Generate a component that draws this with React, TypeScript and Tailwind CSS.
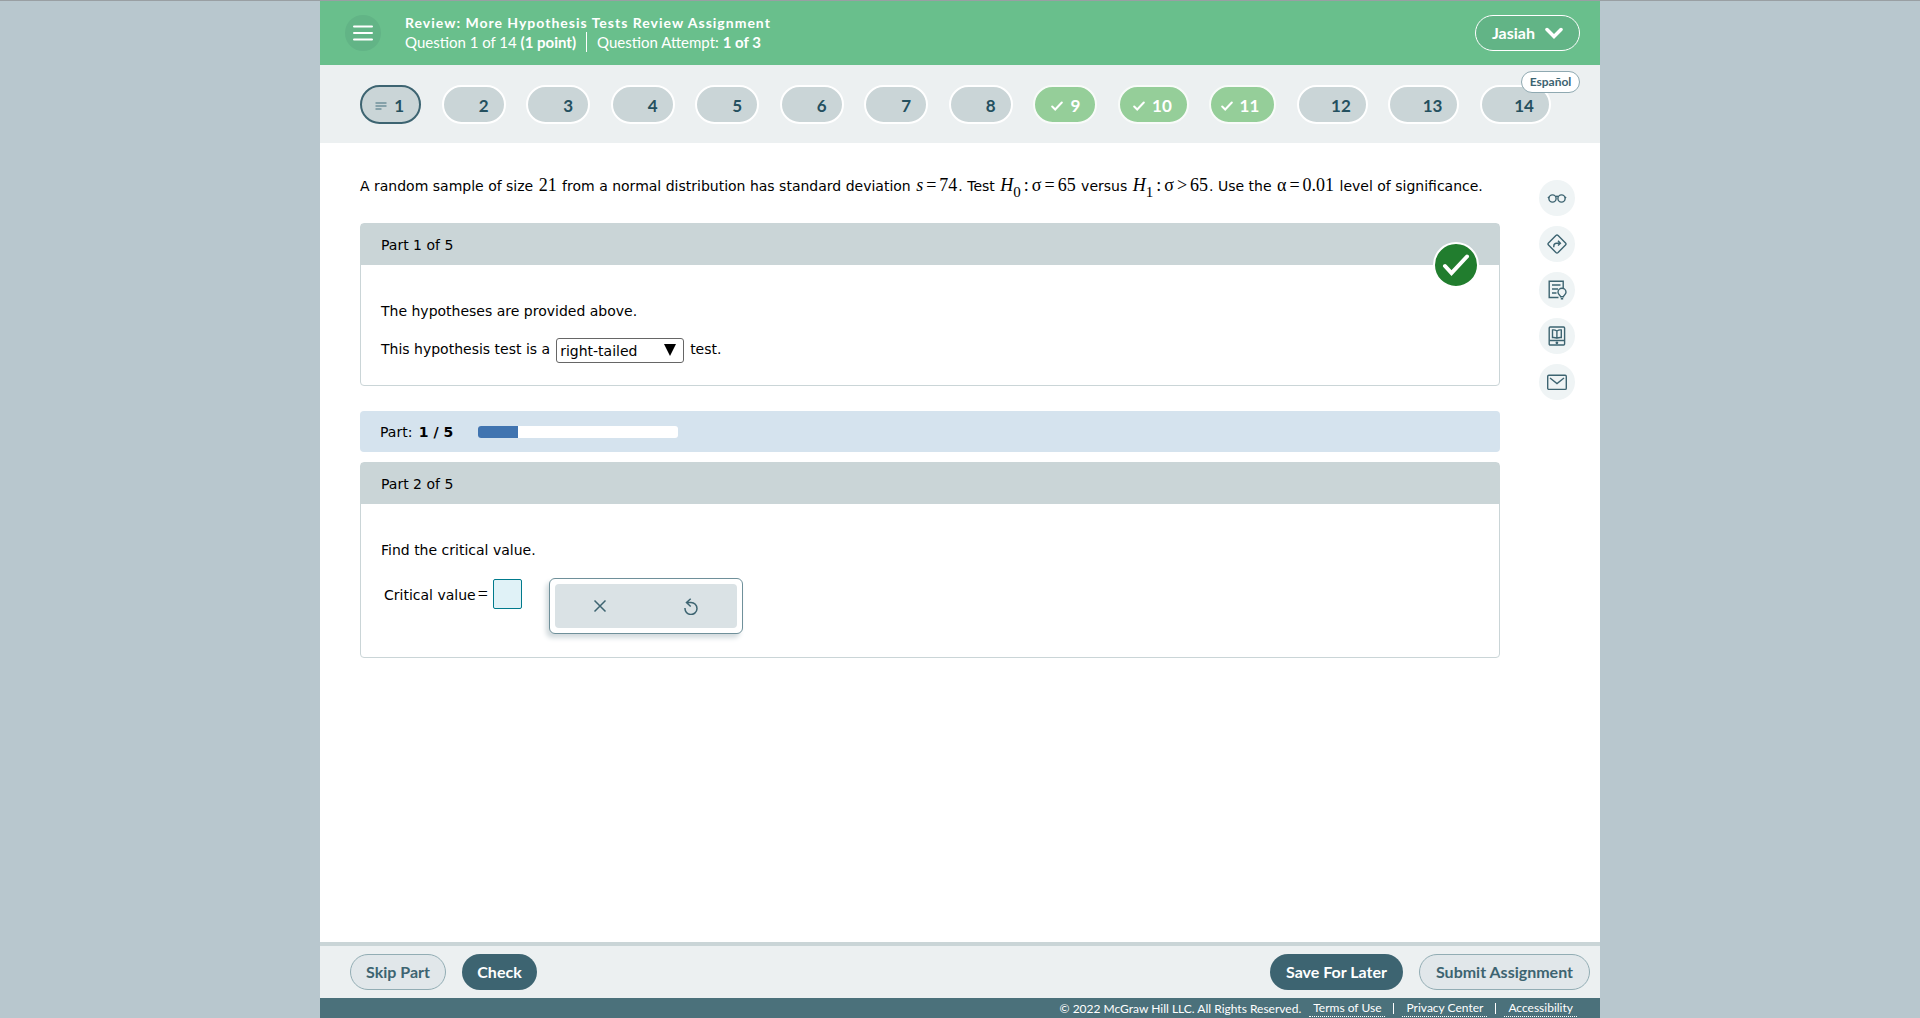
import React, { useState } from 'react';

type Question = {
  id: number;
  status: 'current' | 'open' | 'correct';
  width: string;
};

const questions: Question[] = [
  { id: 1, status: 'current', width: 'w-[61px]' },
  { id: 2, status: 'open', width: 'w-16' },
  { id: 3, status: 'open', width: 'w-16' },
  { id: 4, status: 'open', width: 'w-16' },
  { id: 5, status: 'open', width: 'w-16' },
  { id: 6, status: 'open', width: 'w-16' },
  { id: 7, status: 'open', width: 'w-16' },
  { id: 8, status: 'open', width: 'w-16' },
  { id: 9, status: 'correct', width: 'w-16' },
  { id: 10, status: 'correct', width: 'w-[71px]' },
  { id: 11, status: 'correct', width: 'w-[67px]' },
  { id: 12, status: 'open', width: 'w-[71px]' },
  { id: 13, status: 'open', width: 'w-[71px]' },
  { id: 14, status: 'open', width: 'w-[71px]' },
];

const pillStyles = {
  current: 'border-[#3d6471] bg-[#cad5d7] text-[#24505f]',
  open: 'border-white bg-[#cad5d7] text-[#24505f]',
  correct: 'border-[#f8fbf9] bg-[#95ce99] text-white',
};

const tools = [
  {
    label: 'Explanation',
    icon: (
      <>
        <circle cx="5.5" cy="10.5" r="3.6" />
        <circle cx="14.5" cy="10.5" r="3.6" />
        <path d="M8.6 8.8q1.4-1 2.8 0M1.9 10 1 8.8M18.1 10l.9-1.2" />
      </>
    ),
  },
  {
    label: 'Guided solution',
    icon: (
      <>
        <path d="M8.9 1.5q1.1-1 2.2 0l7.4 7.4q1 1.1 0 2.2l-7.4 7.4q-1.1 1-2.2 0l-7.4-7.4q-1-1.1 0-2.2z" />
        <path d="M6.8 13.2v-1.2q0-2.8 2.8-2.8h3.6M11 6.8l2.4 2.4-2.4 2.4" />
      </>
    ),
  },
  {
    label: 'Hints',
    icon: (
      <>
        <path d="M11.5 17.5H2.2V1.2h14v7.2M5 5h8.5M5 9h6M5 13h4.5" />
        <path d="M13.6 16.8c0-1.8-2.6-2.1-2.6-4.5a4 4 0 0 1 8 0c0 2.4-2.6 2.7-2.6 4.5zM13.8 18.8h2.4" />
      </>
    ),
  },
  {
    label: 'eBook',
    icon: (
      <>
        <rect x="2.2" y="1" width="15.4" height="18" rx="1" />
        <path d="M2.5 14.5h15M9.9 5v7.2M9.9 5Q7.5 3.5 5.5 4v7.5q2.2-.3 4.4.7 2.2-1 4.4-.7V4q-2-.5-4.4 1" />
        <circle cx="9.9" cy="16.8" r=".7" />
      </>
    ),
  },
  {
    label: 'Message instructor',
    icon: (
      <>
        <rect x="0.7" y="3.2" width="18.6" height="14.2" rx="1.2" />
        <path d="m3 6 7 5.5L17 6" />
      </>
    ),
  },
];

const links = ['Terms of Use', 'Privacy Center', 'Accessibility'];

const Num = ({ children }: { children: React.ReactNode }) => (
  <span className="mx-px font-['Liberation_Serif',serif] text-[18px]">{children}</span>
);

const Op = ({ children }: { children: React.ReactNode }) => <span className="mx-[3px]">{children}</span>;

const Sub = ({ children }: { children: React.ReactNode }) => (
  <sub className="bottom-[-6px] text-[15px]">{children}</sub>
);

const CheckMark = () => (
  <svg viewBox="0 0 12 10" className="h-[10px] w-3" fill="none" stroke="currentColor" strokeWidth="2" strokeLinecap="round">
    <path d="m1.2 5.5 3 3L10.8 1.5" />
  </svg>
);

const LinesMark = () => (
  <svg viewBox="0 0 12 8" className="h-2 w-3" fill="none" stroke="#6f909a" strokeWidth="1.5">
    <path d="M.5 1h11M.5 4h11M.5 7h6" />
  </svg>
);

const Header = () => (
  <header className="flex h-16 items-center bg-[#69bf8c] px-5 pl-[25px] text-white">
    <button aria-label="Menu" className="flex size-9 items-center justify-center rounded-full bg-[#62b486]">
      <svg viewBox="0 0 20 16" className="h-4 w-5" stroke="currentColor" strokeWidth="2" strokeLinecap="round">
        <path d="M1 1.5h18M1 8h18M1 14.5h18" />
      </svg>
    </button>
    <div className="ml-6 flex-1">
      <h1 className="text-[14px] leading-[18px] font-bold tracking-[1px]">Review: More Hypothesis Tests Review Assignment</h1>
      <div className="flex h-5 text-[15px] leading-5">
        <p className="border-r border-white pr-[10px]">
          Question 1 of 14 <b>(1 point)</b>
        </p>
        <p className="pl-[10px]">
          Question Attempt: <b>1 of 3</b>
        </p>
      </div>
    </div>
    <button className="flex h-9 w-[105px] items-center justify-center gap-[10px] rounded-full border border-white bg-[#62b486] text-[16px] font-bold">
      Jasiah
      <svg viewBox="0 0 18 12" className="h-3 w-[18px]" fill="none" stroke="currentColor" strokeWidth="3.5" strokeLinecap="round">
        <path d="m2 2.5 7 7 7-7" />
      </svg>
    </button>
  </header>
);

const QuestionNav = () => (
  <nav className="relative h-[78px] bg-[#ecf0f1] pt-5 pr-[49px] pl-10">
    <div className="flex justify-between">
      {questions.map((q) => (
        <button
          key={q.id}
          className={`flex h-[39px] items-center justify-end gap-[7px] rounded-full border-2 pt-[3px] pr-[15px] text-[17px] font-bold ${q.width} ${pillStyles[q.status]}`}
        >
          {q.status === 'current' && <LinesMark />}
          {q.status === 'correct' && <CheckMark />}
          {q.id}
        </button>
      ))}
    </div>
    <button className="absolute top-[6px] right-5 h-[22px] w-[59px] rounded-full border border-[#8fa9b1] bg-white text-[12px] leading-[18px] font-bold text-[#3d6471]">
      Español
    </button>
  </nav>
);

const Panel = ({ title, done, children }: { title: string; done?: boolean; children: React.ReactNode }) => (
  <section className="relative rounded border border-[#cad5d7]">
    <h2 className="h-[41px] bg-[#cad5d7] px-5 leading-[42px]">{title}</h2>
    {done && (
      <div className="absolute top-[18px] right-5 flex size-[46px] items-center justify-center rounded-full border-2 border-white bg-[#217d2e]">
        <svg viewBox="0 0 28 22" className="h-[22px] w-7" fill="none" stroke="#fff" strokeWidth="4" strokeLinecap="round">
          <path d="m3 12 6.5 7L25 2.5" />
        </svg>
      </div>
    )}
    <div className="px-5">{children}</div>
  </section>
);

const App = () => {
  const [tail, setTail] = useState('right-tailed');
  const [value, setValue] = useState('');

  return (
    <div className="min-h-screen border-t border-[#999fa3] bg-[#b8c7ce] font-[Lato,sans-serif]">
      <div className="mx-auto flex min-h-[calc(100vh-1px)] max-w-[1280px] flex-col bg-white">
        <Header />
        <QuestionNav />

        <main className="flex flex-1 gap-[39px] pt-[30px] pr-[25px] pl-10 font-['DejaVu_Sans',sans-serif] text-[14px] leading-5 text-black">
          <div className="flex-1">
            <p className="h-[50px] whitespace-nowrap leading-6">
              A random sample of size <Num>21</Num> from a normal distribution has standard deviation{' '}
              <Num><i>s</i><Op>=</Op>74</Num>. Test{' '}
              <Num><i>H</i><Sub>0</Sub><Op>:</Op>σ<Op>=</Op>65</Num> versus{' '}
              <Num><i>H</i><Sub>1</Sub><Op>:</Op>σ<Op>&gt;</Op>65</Num>. Use the{' '}
              <Num>α<Op>=</Op>0.01</Num> level of significance.
            </p>

            <Panel title="Part 1 of 5" done>
              <p className="pt-9">The hypotheses are provided above.</p>
              <div className="mt-4 mb-[21px] flex h-[27px] items-center gap-[6px]">
                <label htmlFor="tail" className="pb-1">This hypothesis test is a</label>
                <div className="relative">
                  <select
                    id="tail"
                    value={tail}
                    onChange={(e) => setTail(e.target.value)}
                    className="h-[25px] w-32 appearance-none rounded-[3px] border border-[#666] bg-white px-[3px]"
                  >
                    <option>right-tailed</option>
                    <option>left-tailed</option>
                    <option>two-tailed</option>
                  </select>
                  <svg viewBox="0 0 12 12" className="pointer-events-none absolute top-[6px] right-2 size-3">
                    <path d="M0 0h12L6 12z" />
                  </svg>
                </div>
                <span className="pb-1">test.</span>
              </div>
            </Panel>

            <div className="mt-[25px] mb-[10px] flex h-[41px] items-center rounded bg-[#d5e3ee] px-5">
              <span className="w-[98px]">Part: <b className="ml-[2px]">1 / 5</b></span>
              <div className="h-3 w-[200px] overflow-hidden rounded-[3px] bg-white">
                <div className="h-full bg-[#4074b0]" style={{ width: `${(1 / 5) * 100}%` }} />
              </div>
            </div>

            <Panel title="Part 2 of 5">
              <p className="pt-9">Find the critical value.</p>
              <div className="mt-[18px] mb-[23px] flex items-start pl-[3px]">
                <label htmlFor="critical" className="pt-[6px]">
                  Critical value<Num><span className="ml-px">=</span></Num>
                </label>
                <input
                  id="critical"
                  value={value}
                  onChange={(e) => setValue(e.target.value)}
                  className="mt-px ml-1 h-[30px] w-[29px] rounded-[2px] border border-[#007a8c] bg-[#e0f2f7] px-1"
                />
                <div className="ml-[27px] rounded-md border border-[#6f909a] bg-white p-[5px] shadow-[-3px_4px_5px_#d3dbde]">
                  <div className="flex h-[44px] w-[182px] rounded bg-[#dae2e5] text-[#3d6471]">
                    <button aria-label="Clear" className="flex flex-1 items-center justify-center">
                      <svg viewBox="0 0 14 14" className="size-[14px]" stroke="currentColor" strokeWidth="1.5">
                        <path d="m1.5 1.5 11 11M12.5 1.5l-11 11" />
                      </svg>
                    </button>
                    <button aria-label="Reset" className="flex flex-1 items-center justify-center">
                      <svg viewBox="0 0 14 17" className="h-[17px] w-[14px]" fill="none" stroke="currentColor" strokeWidth="1.5">
                        <path d="M1 10a6 6 0 1 0 6-5.5H2.5M6.7.8 2.5 4.5l4.2 4" />
                      </svg>
                    </button>
                  </div>
                </div>
              </div>
            </Panel>
          </div>

          <aside className="flex flex-col gap-[10px] pt-[7px]">
            {tools.map((tool) => (
              <button key={tool.label} aria-label={tool.label} className="flex size-9 items-center justify-center rounded-full bg-[#eff4f5] text-[#3d6471]">
                <svg viewBox="0 0 20 20" className="size-5" fill="none" stroke="currentColor" strokeWidth="1.4">
                  {tool.icon}
                </svg>
              </button>
            ))}
          </aside>
        </main>

        <div className="flex h-14 items-center border-t-4 border-[#cad5d7] bg-[#ecf0f1] pr-[10px] pl-[30px] text-[16px] font-bold">
          <button className="h-9 w-24 rounded-full border border-[#92adb4] bg-[#e1e7ea] text-[#3d6471]">Skip Part</button>
          <button className="ml-4 h-9 w-[75px] rounded-full bg-[#3d6471] text-white">Check</button>
          <button className="ml-auto h-9 w-[133px] rounded-full bg-[#3d6471] text-white">Save For Later</button>
          <button className="ml-4 h-9 w-[171px] rounded-full border border-[#92adb4] bg-[#e1e7ea] text-[#3d6471]">Submit Assignment</button>
        </div>
        <footer className="flex h-5 justify-end bg-[#4b717b] pr-[23px] text-[12px] text-white">
          <span className="pt-[2px] pr-2 leading-[18px]">© 2022 McGraw Hill LLC. All Rights Reserved.</span>
          {links.map((link, i) => (
            <React.Fragment key={link}>
              {i > 0 && <span className="mx-2 mt-[5px] h-[11px] w-px bg-white" />}
              <a href="#" className="h-[19px] border-b border-dotted border-white px-1 leading-5">{link}</a>
            </React.Fragment>
          ))}
        </footer>
      </div>
    </div>
  );
};

export default App;
